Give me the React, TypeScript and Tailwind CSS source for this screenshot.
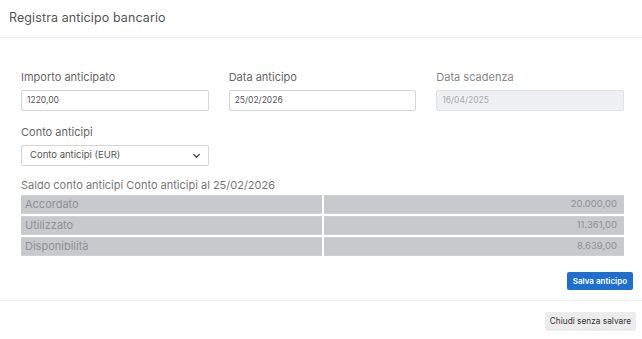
import React from "react";

export default function App() {
  const font = { fontFamily: "Inter, 'Noto Sans', sans-serif" };
  const rows = [
    ["Accordato", "20.000,00"],
    ["Utilizzato", "11.361,00"],
    ["Disponibilità", "8.639,00"],
  ];
  return (
    <div className="w-[642px] h-[339px] bg-white text-[#555] overflow-hidden" style={font}>
      <div className="h-[38px] flex items-center pl-[9px] border-b border-[#f0f0f0]">
        <span className="text-[12.5px] text-[#555] tracking-[0.1px]">Registra anticipo bancario</span>
      </div>
      <div className="px-[21px] pt-[32px] h-[263px] border-b border-[#eeeeee]">
        <div className="grid grid-cols-3 gap-x-[20px] w-[603px]">
          <div className="flex flex-col">
            <label className="text-[11px] text-[#666] leading-[14px]">Importo anticipato</label>
            <div className="mt-[6px] h-[21px] border border-[#d6d6d6] rounded-[2px] flex items-center px-[5px] text-[8.5px] text-[#555]">1220,00</div>
          </div>
          <div className="flex flex-col">
            <label className="text-[11px] text-[#666] leading-[14px]">Data anticipo</label>
            <div className="mt-[6px] h-[21px] border border-[#d6d6d6] rounded-[2px] flex items-center px-[5px] text-[8.5px] text-[#555]">25/02/2026</div>
          </div>
          <div className="flex flex-col">
            <label className="text-[11px] text-[#888] leading-[14px]">Data scadenza</label>
            <div className="mt-[6px] h-[21px] border border-[#e0e2e5] bg-[#eef0f3] rounded-[2px] flex items-center px-[5px] text-[8.5px] text-[#aaa]">16/04/2025</div>
          </div>
        </div>
        <div className="mt-[14px] flex flex-col w-[188px]">
          <label className="text-[11px] text-[#666] leading-[14px]">Conto anticipi</label>
          <div className="mt-[6px] h-[21px] border border-[#d6d6d6] rounded-[2px] flex items-center justify-between pl-[8px] pr-[7px] text-[9.5px] text-[#555]">
            <span>Conto anticipi (EUR)</span>
            <svg width="9" height="9" viewBox="0 0 16 16" fill="none" stroke="#444" strokeWidth="2.4" strokeLinecap="round" strokeLinejoin="round">
              <path d="M3 6l5 5 5-5" />
            </svg>
          </div>
        </div>
        <div className="mt-[12px] text-[11px] text-[#777] leading-[14px]">Saldo conto anticipi Conto anticipi al 25/02/2026</div>
        <div className="mt-[3px] w-[603px] flex flex-col gap-[2px]">
          {rows.map(([a, b]) => (
            <div key={a} className="grid grid-cols-2 gap-[2px]">
              <div className="h-[19px] bg-[#c7c9cc] border-y border-[#cfd1d4] flex items-center px-[4px] text-[11px] text-[#8f9194]">{a}</div>
              <div className="h-[19px] bg-[#c7c9cc] border-y border-[#cfd1d4] flex items-center justify-end pl-[4px] pr-[7px] text-[9.5px] text-[#8f9194]">{b}</div>
            </div>
          ))}
        </div>
        <div className="mt-[16px] flex justify-end -mr-[12px]">
          <button className="h-[18px] px-[6px] bg-[#1f6fd1] rounded-[2px] text-white text-[8px] font-semibold">Salva anticipo</button>
        </div>
      </div>
      <div className="flex justify-end pr-[6px] pt-[11px]">
        <button className="h-[19px] px-[5px] bg-[#ececec] rounded-[2px] text-[#333] text-[8.3px]">Chiudi senza salvare</button>
      </div>
    </div>
  );
}
